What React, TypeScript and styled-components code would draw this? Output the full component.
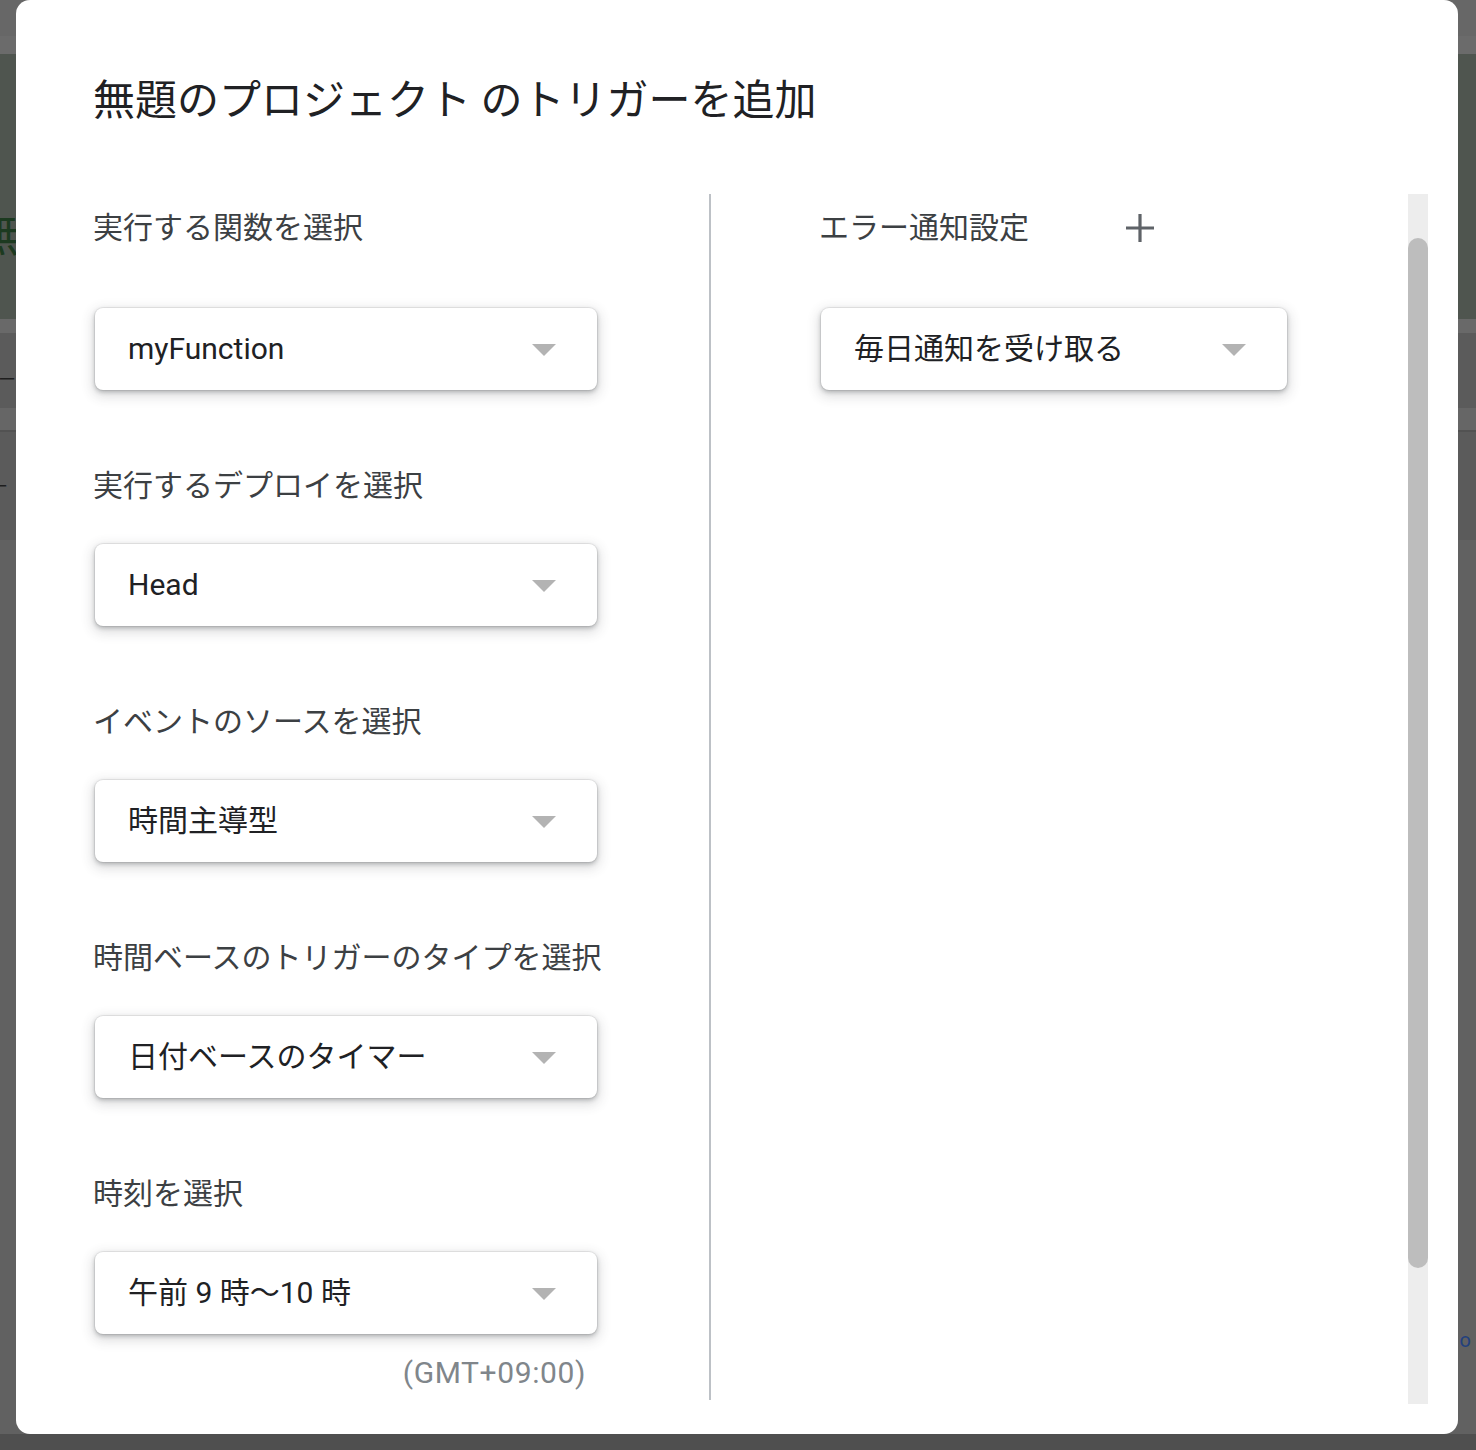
import styled, { createGlobalStyle } from "styled-components";

const GlobalStyle = createGlobalStyle`
  html, body {
    margin: 0;
    padding: 0;
  }
  body {
    font-family: Roboto, "Noto Sans CJK JP", sans-serif;
    background: #606060;
    overflow: hidden;
  }
`;

const Page = styled.div`
  width: 1476px;
  height: 1450px;
  overflow: hidden;
  display: flex;
  flex-direction: column;
`;

const Band = styled.div<{ $h: number; $bg: string }>`
  height: ${(p) => p.$h}px;
  background: ${(p) => p.$bg};
  flex-shrink: 0;
  overflow: hidden;
`;

// underlying page heading, only its first glyph peeks out beside the dialog
const PageHeading = styled.h1`
  margin: 149px 0 0 -27px;
  width: 43px;
  overflow: hidden;
  font-family: "Noto Sans CJK JP", sans-serif;
  font-size: 46px;
  line-height: 56px;
  font-weight: 400;
  color: #1c3a20;
  white-space: nowrap;
`;

const PageText = styled.div<{ $top: number; $left: number }>`
  margin: ${(p) => p.$top}px 0 0 ${(p) => p.$left}px;
  width: 30px;
  overflow: hidden;
  font-family: "Noto Sans CJK JP", sans-serif;
  font-size: 18px;
  line-height: 20px;
  color: #1e1e1e;
  white-space: nowrap;
`;

const FooterBand = styled(Band)`
  display: flex;
  flex-direction: column;
  justify-content: flex-end;
  align-items: flex-end;
  padding-bottom: 86px;
  box-sizing: border-box;
`;

const LinkDot = styled.span`
  margin-right: 5px;
  font-size: 20px;
  line-height: 16px;
  color: #22407e;
`;

const Dialog = styled.div`
  position: fixed;
  left: 16px;
  top: 0;
  width: 1442px;
  height: 1434px;
  box-sizing: border-box;
  padding: 69px 30px 0 77px;
  background: #fff;
  border-radius: 14px;
  display: flex;
  flex-direction: column;
`;

const Title = styled.h2`
  margin: 0;
  font-family: "Noto Sans CJK JP", sans-serif;
  font-size: 42px;
  line-height: 56px;
  font-weight: 400;
  color: #202124;
  white-space: nowrap;
`;

const Body = styled.div`
  margin-top: 69px;
  height: 1210px;
  display: grid;
  grid-template-columns: 616px 2px 697px 20px;
`;

const Column = styled.div<{ $padLeft?: number }>`
  padding-top: 10px;
  padding-left: ${(p) => p.$padLeft ?? 0}px;
  display: flex;
  flex-direction: column;
`;

const Divider = styled.div`
  background: #bdc1c6;
  margin-bottom: 4px;
`;

const Field = styled.div`
  display: flex;
  flex-direction: column;
  & + & {
    margin-top: 72px;
  }
`;

const Label = styled.div<{ $gap?: number }>`
  font-family: "Noto Sans CJK JP", sans-serif;
  font-size: 30px;
  line-height: 42px;
  color: #3c4043;
  margin-bottom: ${(p) => p.$gap ?? 40}px;
  white-space: nowrap;
`;

const HeaderRow = styled.div`
  display: flex;
  align-items: center;
  margin-bottom: 62px;
`;

const AddButton = styled.button`
  margin: 5px 0 0 97px;
  width: 28px;
  height: 28px;
  padding: 0;
  border: none;
  background: none;
  display: flex;
  cursor: pointer;
`;

const Select = styled.div<{ $width: number }>`
  width: ${(p) => p.$width}px;
  height: 82px;
  margin-left: 2px;
  box-sizing: border-box;
  padding: 0 41px 0 33px;
  display: flex;
  align-items: center;
  justify-content: space-between;
  background: #fff;
  border-radius: 8px;
  box-shadow: 0 0 0 1px rgba(60, 64, 67, 0.08), 0 2px 4px 0 rgba(60, 64, 67, 0.32),
    0 4px 12px 3px rgba(60, 64, 67, 0.16);
`;

const SelectText = styled.span`
  font-family: Roboto, "Noto Sans CJK JP", sans-serif;
  font-size: 30px;
  line-height: 40px;
  color: #202124;
  white-space: nowrap;
`;

const Caret = styled.span`
  width: 0;
  height: 0;
  border-left: 12px solid transparent;
  border-right: 12px solid transparent;
  border-top: 12px solid #b3b3b3;
  margin-top: 2px;
`;

const Zone = styled.div`
  width: 502px;
  margin-left: 2px;
  margin-top: 21px;
  box-sizing: border-box;
  padding-right: 11px;
  text-align: right;
  font-family: "Google Sans", Roboto, sans-serif;
  font-size: 30px;
  letter-spacing: 0.6px;
  line-height: 36px;
  color: #80868b;
`;

const Track = styled.div`
  background: #ededed;
  display: flex;
  flex-direction: column;
`;

const Thumb = styled.div`
  margin-top: 44px;
  height: 1030px;
  background: #bdbdbd;
  border-radius: 10px;
`;

interface DropdownProps {
  value: string;
  width?: number;
}

const Dropdown = ({ value, width = 502 }: DropdownProps): JSX.Element => (
  <Select $width={width}>
    <SelectText>{value}</SelectText>
    <Caret />
  </Select>
);

const fields = [
  { label: "実行するデプロイを選択", value: "Head" },
  { label: "イベントのソースを選択", value: "時間主導型" },
  { label: "時間ベースのトリガーのタイプを選択", value: "日付ベースのタイマー" },
  { label: "時刻を選択", value: "午前 9 時〜10 時" },
];

const App = (): JSX.Element => {
  return (
    <>
      <GlobalStyle />
      <Page>
        <Band $h={36} $bg="#676767" />
        <Band $h={18} $bg="#6b6b6b" />
        <Band $h={265} $bg="#4f554f">
          <PageHeading>無題のプロジェクト</PageHeading>
        </Band>
        <Band $h={14} $bg="#696969" />
        <Band $h={75} $bg="#5b5b5b">
          <PageText $top={35} $left={-2}>ーフ</PageText>
        </Band>
        <Band $h={22} $bg="#666666" />
        <Band $h={2} $bg="#525252" />
        <Band $h={108} $bg="#5b5b5b">
          <PageText $top={43} $left={-10}>ー</PageText>
        </Band>
        <FooterBand $h={894} $bg="#616161">
          <LinkDot>o</LinkDot>
        </FooterBand>
        <Band $h={16} $bg="#4f4f4f" />
      </Page>

      <Dialog>
        <Title>無題のプロジェクト のトリガーを追加</Title>
        <Body>
          <Column>
            <Field>
              <Label $gap={62}>実行する関数を選択</Label>
              <Dropdown value="myFunction" />
            </Field>
            {fields.map((f) => (
              <Field key={f.label}>
                <Label>{f.label}</Label>
                <Dropdown value={f.value} />
              </Field>
            ))}
            <Zone>(GMT+09:00)</Zone>
          </Column>
          <Divider />
          <Column $padLeft={108}>
            <HeaderRow>
              <Label $gap={0}>エラー通知設定</Label>
              <AddButton aria-label="追加">
                <svg width="28" height="28" viewBox="0 0 28 28">
                  <path d="M14 0v28M0 14h28" stroke="#5f6368" strokeWidth="3.2" />
                </svg>
              </AddButton>
            </HeaderRow>
            <Dropdown value="毎日通知を受け取る" width={466} />
          </Column>
          <Track>
            <Thumb />
          </Track>
        </Body>
      </Dialog>
    </>
  );
};

export default App;
